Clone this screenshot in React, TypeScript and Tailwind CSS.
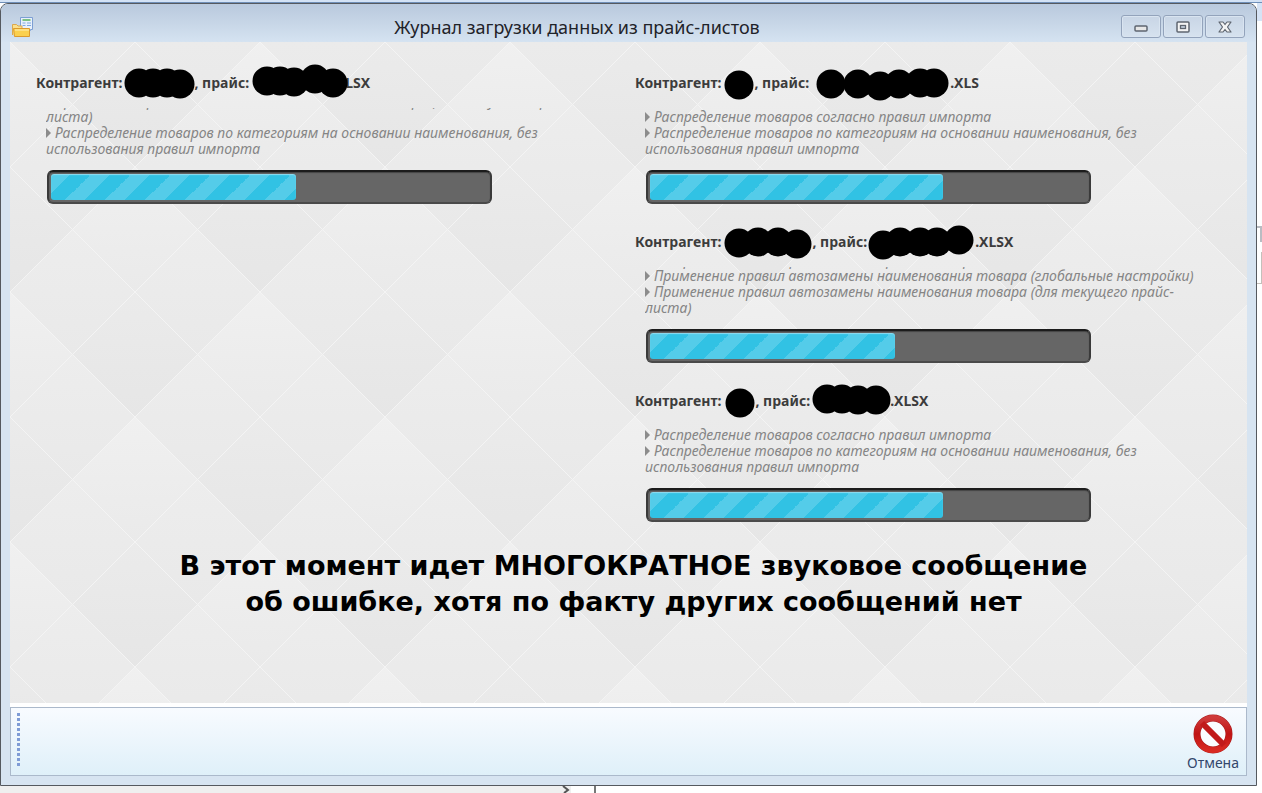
type Dot = [number, number];

type Job = {
  contractor: { width: number; dots: Dot[] };
  file: { width: number; dots: Dot[] };
  ext: string;
  log: string[];
  progress: number;
};

const RULES = "Распределение товаров согласно правил импорта";
const CATEGORIES =
  "Распределение товаров по категориям на основании наименования, без использования правил импорта";
const REPLACE_GLOBAL = "Применение правил автозамены наименования товара (глобальные настройки)";
const REPLACE_PRICE = "Применение правил автозамены наименования товара (для текущего прайс-листа)";

const leftJobs: Job[] = [
  {
    contractor: { width: 72, dots: [[17, 18], [31, 18], [45, 18], [58, 19]] },
    file: { width: 96, dots: [[18, 16], [31, 16], [45, 17], [66, 14], [84, 18]] },
    ext: "LSX",
    log: [REPLACE_PRICE, CATEGORIES],
    progress: 56,
  },
];

const rightJobs: Job[] = [
  {
    contractor: { width: 33, dots: [[18, 20]] },
    file: { width: 141, dots: [[22, 19], [49, 19], [71, 21], [90, 19], [111, 18], [125, 18]] },
    ext: ".XLS",
    log: [RULES, CATEGORIES],
    progress: 67,
  },
  {
    contractor: { width: 91, dots: [[18, 19], [37, 18], [57, 18], [76, 20]] },
    file: { width: 108, dots: [[16, 21], [33, 18], [53, 18], [70, 18], [92, 16]] },
    ext: ".XLSX",
    log: [RULES, REPLACE_GLOBAL, REPLACE_PRICE],
    progress: 56,
  },
  {
    contractor: { width: 34, dots: [[19, 20]] },
    file: { width: 80, dots: [[17, 16], [32, 16], [48, 17], [66, 17]] },
    ext: ".XLSX",
    log: [RULES, CATEGORIES],
    progress: 67,
  },
];

function Redacted({ width, dots }: { width: number; dots: Dot[] }) {
  return (
    <svg width={width} height="34" className="relative shrink-0 overflow-visible" aria-hidden="true">
      {dots.map(([x, y]) => (
        <circle key={x} cx={x} cy={y} r="14.5" fill="#000" />
      ))}
    </svg>
  );
}

function JobCard({ job }: { job: Job }) {
  return (
    <section>
      <h2 className="flex h-9 items-center whitespace-pre pb-[2px] text-[14px] font-bold text-[#3c3c3c]">
        <span>Контрагент:</span>
        <Redacted {...job.contractor} />
        <span>, прайс:</span>
        <Redacted {...job.file} />
        <span>{job.ext}</span>
      </h2>

      {/* Log keeps only the last lines in view */}
      <ul className="ml-[10px] mt-[7px] flex h-[49px] max-w-[556px] flex-col justify-end overflow-hidden text-[14px] italic leading-4 text-[#858585]">
        {job.log.map((line) => (
          <li key={line} className="shrink-0">
            <svg width="5" height="10" viewBox="0 0 5 10" className="mr-1 inline-block align-baseline" aria-hidden="true">
              <path d="M0 0 5 5 0 10Z" fill="#8c8c8c" />
            </svg>
            {line}
          </li>
        ))}
      </ul>

      <div
        role="progressbar"
        aria-label="Загрузка"
        aria-valuenow={job.progress}
        className="ml-[11px] mt-[13px] h-[34px] max-w-[445px] rounded-md border-2 border-t-[#1c1c1c] border-x-[#3a3a3a] border-b-[#4a4a4a] bg-[#666] p-[2px] shadow-[inset_0_1px_1px_#444]"
      >
        <div
          className="h-full rounded-[3px] bg-[#31c2e4] bg-[linear-gradient(-45deg,rgba(255,255,255,0.17)_25%,transparent_25%,transparent_50%,rgba(255,255,255,0.17)_50%,rgba(255,255,255,0.17)_75%,transparent_75%)] bg-[length:40px_40px] bg-[position:20px_0] shadow-[inset_0_1px_1px_#8fdcf0]"
          style={{ width: `${job.progress}%` }}
        />
      </div>
    </section>
  );
}

function Backdrop() {
  return (
    <svg className="absolute inset-0 h-full w-full" aria-hidden="true">
      <defs>
        <linearGradient id="light" x1="0" y1="0" x2="0" y2="1">
          <stop offset="0" stopColor="#f0f0f0" />
          <stop offset="1" stopColor="#eaeaea" />
        </linearGradient>
        <linearGradient id="dark" x1="0" y1="0" x2="0" y2="1">
          <stop offset="0" stopColor="#ebebeb" />
          <stop offset="1" stopColor="#e6e6e6" />
        </linearGradient>
        <linearGradient id="mid" x1="0" y1="0" x2="0" y2="1">
          <stop offset="0" stopColor="#ededed" />
          <stop offset="1" stopColor="#e9e9e9" />
        </linearGradient>
        <pattern id="diamonds" width="250" height="250" patternUnits="userSpaceOnUse">
          <g fill="url(#light)">
            <path d="M0 0 62.5 62.5 0 125-62.5 62.5Z" />
            <path d="M250 0 312.5 62.5 250 125 187.5 62.5Z" />
            <path d="M125 125 187.5 187.5 125 250 62.5 187.5Z" />
          </g>
          <g fill="url(#dark)">
            <path d="M125 0 187.5 62.5 125 125 62.5 62.5Z" />
            <path d="M0 125 62.5 187.5 0 250-62.5 187.5Z" />
            <path d="M250 125 312.5 187.5 250 250 187.5 187.5Z" />
          </g>
          <g fill="url(#mid)">
            <path d="M62.5-62.5 125 0 62.5 62.5 0 0Z" />
            <path d="M187.5-62.5 250 0 187.5 62.5 125 0Z" />
            <path d="M62.5 62.5 125 125 62.5 187.5 0 125Z" />
            <path d="M187.5 62.5 250 125 187.5 187.5 125 125Z" />
            <path d="M62.5 187.5 125 250 62.5 312.5 0 250Z" />
            <path d="M187.5 187.5 250 250 187.5 312.5 125 250Z" />
          </g>
          <path
            d="M0 0 250 250M250 0 0 250M125 0 250 125M0 125 125 250M125 0 0 125M250 125 125 250"
            stroke="#f4f4f4"
            strokeWidth="1"
            fill="none"
          />
        </pattern>
      </defs>
      <rect width="100%" height="100%" fill="url(#diamonds)" />
    </svg>
  );
}

function FolderIcon() {
  return (
    <svg width="21" height="20" viewBox="0 0 21 20" aria-hidden="true">
      <path d="M8.500 .5h12v12h-2v1h-10z" fill="#e8f1fb" stroke="#7d9fd3" />
      <path d="M10.500 3h8" stroke="#58b25c" strokeWidth="1.500" />
      <path d="M10.500 6h3M15 6h4M10.500 8.500h3M15 8.500h4" stroke="#7ea8e0" />
      <path d="M.5 18V7.500h4l1.500 1.500h4V12h7" fill="#fbe08c" stroke="#dca94c" />
      <path d="M1.500 11.500h16v8h-15z" fill="#fbd04e" stroke="#dc9a2c" />
      <path d="M3 13h14" stroke="#fff0b5" />
    </svg>
  );
}

const captionButton =
  "flex h-[23px] w-10 items-center justify-center rounded-[3px] border border-[#93a3bb] bg-linear-to-b from-[#c8d5e5] to-[#d6e2ef] shadow-[inset_0_0_0_1px_#d9e4f0]";

function TitleBar() {
  return (
    <header className="flex h-[38px] items-start bg-linear-to-b from-[#b9c9dd] to-[#d5e3f1] px-[11px]">
      <div className="mt-[13px]">
        <FolderIcon />
      </div>
      <h1 className="mt-[10px] flex-1 text-center text-[18px] leading-[26px] text-[#1f2329]">
        Журнал загрузки данных из прайс-листов
      </h1>
      <div className="mt-[11px] flex gap-[2px]">
        <button type="button" aria-label="Свернуть" className={captionButton}>
          <svg width="14" height="8" viewBox="0 0 14 8" className="mt-1">
            <rect x="1" y="1" width="12" height="5" rx="1" fill="#e6e6e6" stroke="#5f6670" strokeWidth="1.500" />
          </svg>
        </button>
        <button type="button" aria-label="Развернуть" className={captionButton}>
          <svg width="14" height="12" viewBox="0 0 14 12">
            <rect x="1" y="1" width="12" height="10" rx="1" fill="#f4f4f4" stroke="#5f6670" strokeWidth="1.500" />
            <rect x="4.500" y="4.500" width="5" height="3" fill="#c5d0de" stroke="#5f6670" strokeWidth="1.300" />
          </svg>
        </button>
        <button type="button" aria-label="Закрыть" className={captionButton}>
          <svg width="14" height="12" viewBox="0 0 14 12">
            <path
              d="M1 1H5L7 3.500 9 1H13L9.500 6 13 11H9L7 8.500 5 11H1L4.500 6Z"
              fill="#f4f4f4"
              stroke="#5f6670"
              strokeWidth="1.200"
              strokeLinejoin="round"
            />
          </svg>
        </button>
      </div>
    </header>
  );
}

function CancelIcon() {
  return (
    <svg width="40" height="40" viewBox="0 0 40 40" aria-hidden="true">
      <defs>
        <linearGradient id="stop" x1="0" y1="0" x2="0" y2="1">
          <stop offset="0" stopColor="#cf3a3a" />
          <stop offset=".5" stopColor="#c01414" />
          <stop offset="1" stopColor="#d92a22" />
        </linearGradient>
      </defs>
      <circle cx="20" cy="20" r="16" fill="#fafdff" stroke="#a81c1c" strokeWidth="7" />
      <circle cx="20" cy="20" r="16" fill="none" stroke="url(#stop)" strokeWidth="6" />
      <path d="M9 9 31 31" stroke="#c11a1a" strokeWidth="6" />
    </svg>
  );
}

export default function App() {
  return (
    <div className="flex min-h-screen flex-col bg-white font-['Noto_Sans','Open_Sans',sans-serif]">
      {/* Edge of the main program above the dialog */}
      <div className="h-[3px] border-b border-[#6f8fb8] bg-[#d3e2f5]" />

      <div className="flex flex-1">
        <div className="flex flex-1 flex-col overflow-hidden rounded-t-lg border border-[#55595f] bg-[#d7e4f1]">
          <TitleBar />
          <div className="flex flex-1 flex-col px-[9px] pb-[9px]">
            <main className="relative flex-1 overflow-hidden">
              <Backdrop />
              <div className="relative grid grid-cols-2 pl-[26px] pr-[13px] pt-[23px]">
                <div>
                  {leftJobs.map((job, i) => (
                    <JobCard key={i} job={job} />
                  ))}
                </div>
                <div className="space-y-5">
                  {rightJobs.map((job, i) => (
                    <JobCard key={i} job={job} />
                  ))}
                </div>
              </div>
              <p className="relative mt-[26px] pl-[10px] text-center font-['DejaVu_Sans',sans-serif] text-[27px] font-bold leading-9 text-black">
                В этот момент идет МНОГОКРАТНОЕ звуковое сообщение
                <br />
                об ошибке, хотя по факту других сообщений нет
              </p>
            </main>

            <div className="h-1 bg-white" />
            <footer className="flex h-[69px] justify-between border border-[#abb9cb] bg-linear-to-b from-[#f8fbff] to-[#dff0f9] pl-[6px] pr-[7px]">
              <div className="mt-[5px] h-[55px] w-[3px] bg-[repeating-linear-gradient(to_bottom,#7f9cd6_0_3px,transparent_3px_5px)]" />
              <button type="button" className="flex flex-col items-center pt-[6px] text-[14px] leading-[18px] text-[#33476b]">
                <CancelIcon />
                Отмена
              </button>
            </footer>
          </div>
        </div>

        {/* Sliver of the main program to the right */}
        <div className="w-[5px] border-t-[18px] border-[#d6e3f5] pt-[205px]">
          <div className="h-4 border-r-2 border-t-2 border-[#b9bcc2]" />
          <div className="mt-[10px] h-8 border-b border-r border-[#c4c0bb]" />
        </div>
      </div>

      {/* Sliver of the main program below */}
      <div className="flex h-[7px] overflow-hidden">
        <div className="w-[571px] bg-[#efefef]">
          <svg width="9" height="7" viewBox="0 0 9 7" className="ml-auto block" aria-hidden="true">
            <path d="M1 0 6 4 2 7" fill="none" stroke="#555" strokeWidth="2" />
          </svg>
        </div>
        <div className="ml-[23px] w-[2px] bg-[#777]" />
      </div>
    </div>
  );
}
